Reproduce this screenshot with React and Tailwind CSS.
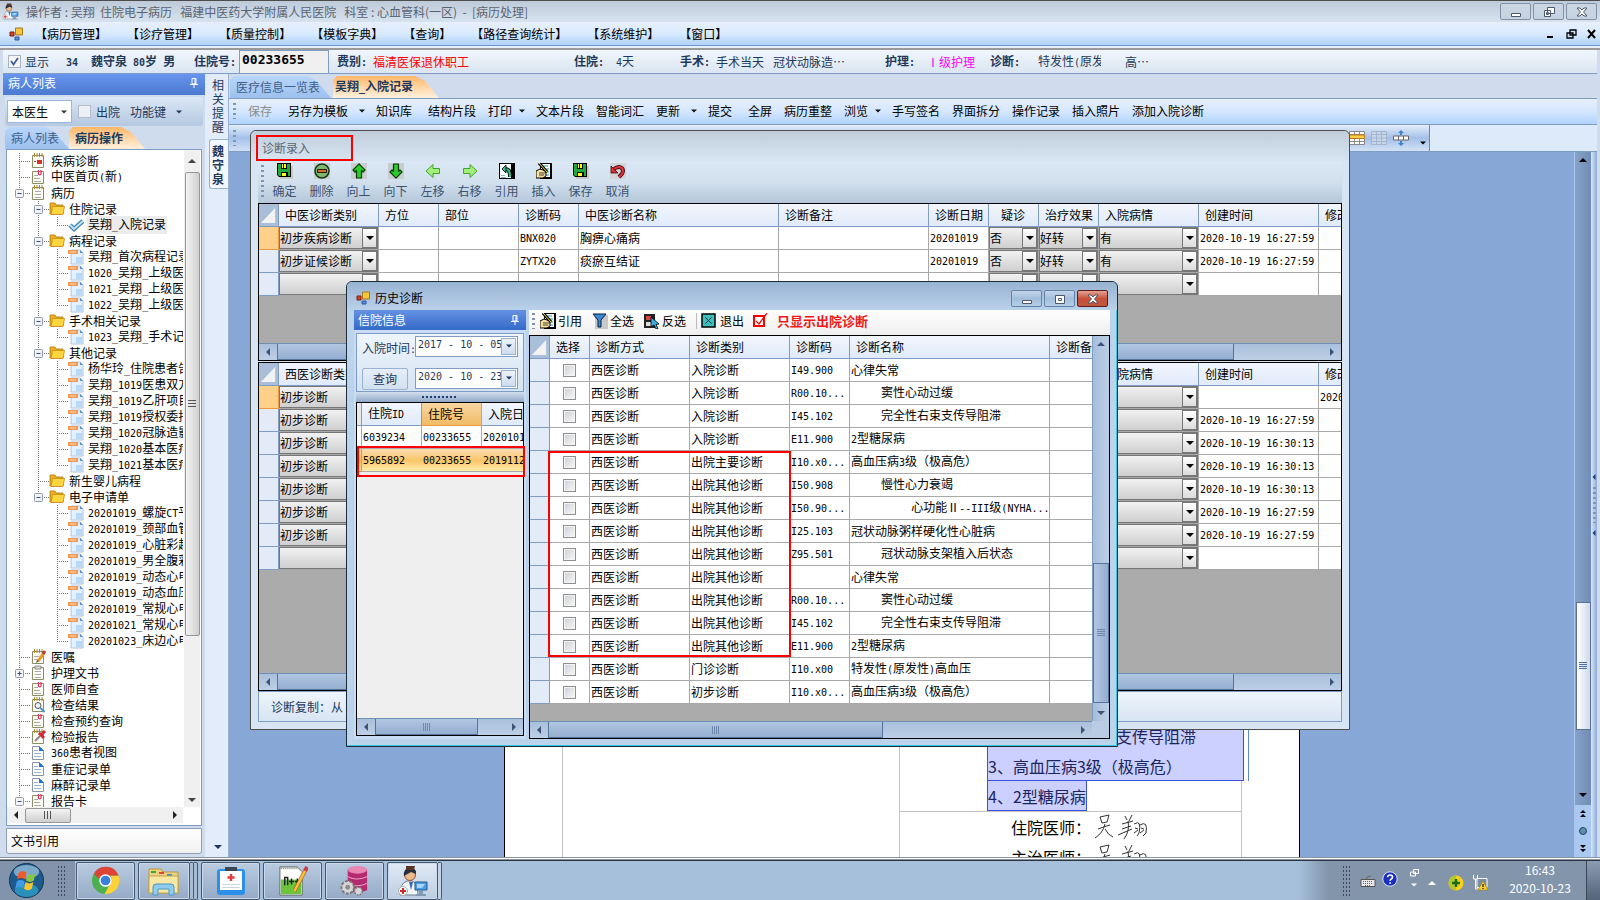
import React from 'react';

const menus = ['病历管理', '诊疗管理', '质量控制', '模板字典', '查询', '路径查询统计', '系统维护', '窗口'];

const toolItems = [
    { text: '保存', cls: 'w-10 text-[#8d8d8d]' },
    { text: '另存为模板', cls: 'w-[88px]', arrow: true },
    { text: '知识库', cls: 'w-[52px]' },
    { text: '结构片段', cls: 'w-[60px]' },
    { text: '打印', cls: 'w-12', arrow: true },
    { text: '文本片段', cls: 'w-[60px]' },
    { text: '智能词汇', cls: 'w-[60px]' },
    { text: '更新', cls: 'w-[52px]', arrow: true },
    { text: '提交', cls: 'w-10' },
    { text: '全屏', cls: 'w-9' },
    { text: '病历重整', cls: 'w-[60px]' },
    { text: '浏览', cls: 'w-12', arrow: true },
    { text: '手写签名', cls: 'w-[60px]' },
    { text: '界面拆分', cls: 'w-[60px]' },
    { text: '操作记录', cls: 'w-[60px]' },
    { text: '插入照片', cls: 'w-[60px]' },
    { text: '添加入院诊断', cls: 'w-[84px]' },
];

// level, icon, text, open ('-', '+' or nothing), last child of its group
const tree = [
    { level: 0, icon: 'noteRed', text: '疾病诊断' },
    { level: 0, icon: 'clip', text: '中医首页(新)' },
    { level: 0, icon: 'note', text: '病历', open: '-' },
    { level: 1, icon: 'folder', text: '住院记录', open: '-' },
    { level: 2, icon: 'check', text: '吴翔_入院记录', last: true, active: true },
    { level: 1, icon: 'folder', text: '病程记录', open: '-' },
    { level: 2, icon: 'doc', text: '吴翔_首次病程记录' },
    { level: 2, icon: 'doc', text: '1020_吴翔_上级医师' },
    { level: 2, icon: 'doc', text: '1021_吴翔_上级医师' },
    { level: 2, icon: 'doc', text: '1022_吴翔_上级医师', last: true },
    { level: 1, icon: 'folder', text: '手术相关记录', open: '-' },
    { level: 2, icon: 'doc', text: '1023_吴翔_手术记录', last: true },
    { level: 1, icon: 'folder', text: '其他记录', open: '-' },
    { level: 2, icon: 'doc', text: '杨华玲_住院患者告知' },
    { level: 2, icon: 'doc', text: '吴翔_1019医患双方' },
    { level: 2, icon: 'doc', text: '吴翔_1019乙肝项目' },
    { level: 2, icon: 'doc', text: '吴翔_1019授权委托' },
    { level: 2, icon: 'doc', text: '吴翔_1020冠脉造影' },
    { level: 2, icon: 'doc', text: '吴翔_1020基本医疗' },
    { level: 2, icon: 'doc', text: '吴翔_1021基本医疗', last: true },
    { level: 1, icon: 'folder', text: '新生婴儿病程' },
    { level: 1, icon: 'folder', text: '电子申请单', open: '-', last: true },
    { level: 2, icon: 'doc', text: '20201019_螺旋CT平扫', end: true },
    { level: 2, icon: 'doc', text: '20201019_颈部血管', end: true },
    { level: 2, icon: 'doc', text: '20201019_心脏彩超', end: true },
    { level: 2, icon: 'doc', text: '20201019_男全腹彩', end: true },
    { level: 2, icon: 'doc', text: '20201019_动态心电', end: true },
    { level: 2, icon: 'doc', text: '20201019_动态血压', end: true },
    { level: 2, icon: 'doc', text: '20201019_常规心电', end: true },
    { level: 2, icon: 'doc', text: '20201021_常规心电', end: true },
    { level: 2, icon: 'doc', text: '20201023_床边心电', end: true, last: true },
    { level: 0, icon: 'pencil', text: '医嘱' },
    { level: 0, icon: 'board', text: '护理文书', open: '+' },
    { level: 0, icon: 'clip', text: '医师自查' },
    { level: 0, icon: 'search', text: '检查结果' },
    { level: 0, icon: 'clip', text: '检查预约查询' },
    { level: 0, icon: 'pin', text: '检验报告' },
    { level: 0, icon: 'page', text: '360患者视图' },
    { level: 0, icon: 'page', text: '重症记录单' },
    { level: 0, icon: 'page', text: '麻醉记录单' },
    { level: 0, icon: 'clip', text: '报告卡', open: '-' },
];

const historyRows = [
    ['入院诊断', 'I49.900', '心律失常'],
    ['入院诊断', 'R00.10...', '     窦性心动过缓'],
    ['入院诊断', 'I45.102', '     完全性右束支传导阻滞'],
    ['入院诊断', 'E11.900', '2型糖尿病'],
    ['出院主要诊断', 'I10.x0...', '高血压病3级（极高危）'],
    ['出院其他诊断', 'I50.908', '     慢性心力衰竭'],
    ['出院其他诊断', 'I50.90...', '          心功能Ⅱ--III级(NYHA...'],
    ['出院其他诊断', 'I25.103', '冠状动脉粥样硬化性心脏病'],
    ['出院其他诊断', 'Z95.501', '     冠状动脉支架植入后状态'],
    ['出院其他诊断', '', '心律失常'],
    ['出院其他诊断', 'R00.10...', '     窦性心动过缓'],
    ['出院其他诊断', 'I45.102', '     完全性右束支传导阻滞'],
    ['出院其他诊断', 'E11.900', '2型糖尿病'],
    ['门诊诊断', 'I10.x00', '特发性(原发性)高血压'],
    ['初步诊断', 'I10.x0...', '高血压病3级（极高危）'],
];

const tcmRows = [
    { type: '初步疾病诊断', code: 'BNX020', name: '胸痹心痛病', date: '20201019', doubt: '否', effect: '好转', state: '有', time: '2020-10-19 16:27:59' },
    { type: '初步证候诊断', code: 'ZYTX20', name: '痰瘀互结证', date: '20201019', doubt: '否', effect: '好转', state: '有', time: '2020-10-19 16:27:59' },
    { type: '' },
];

const westRows = [
    { type: '初步诊断', changed: '20201019' },
    { type: '初步诊断', time: '2020-10-19 16:27:59' },
    { type: '初步诊断', time: '2020-10-19 16:30:13' },
    { type: '初步诊断', time: '2020-10-19 16:30:13' },
    { type: '初步诊断', time: '2020-10-19 16:30:13' },
    { type: '初步诊断', time: '2020-10-19 16:27:59' },
    { type: '初步诊断', time: '2020-10-19 16:27:59' },
    { type: '' },
];

// latin runs are set in a half-width mono face next to the full-width characters
const T = ({ children }) => (
    <>
        {children.split(/([\x20-\x7e]+)/).filter(Boolean).map((part, i) =>
            /^[\x20-\x7e]/.test(part) ? (
                <span key={i} className="whitespace-pre font-['DejaVu_Sans_Mono',monospace] text-[10px]">{part}</span>
            ) : (
                <span key={i}>{part}</span>
            )
        )}
    </>
);

const Triangle = ({ dir = 'down', color = '#111', className = '' }) => {
    const d = {
        down: 'M0 2h8L4 6z',
        up: 'M0 6h8L4 2z',
        left: 'M6 0v8L2 4z',
        right: 'M2 0v8l4-4z',
    }[dir];
    return (
        <svg viewBox="0 0 8 8" className={`h-2 w-2 shrink-0 ${className}`}>
            <path d={d} fill={color} />
        </svg>
    );
};

const Floppy = () => (
    <svg viewBox="0 0 16 16" className="h-4 w-4">
        <path d="M3 3h13v13H3z" fill="#c8c8c8" />
        <path d="M0 0h14v14H2l-2-2z" fill="#000" />
        <path d="M1 1h3v5h6V1h3v12h-2V9H4v4H2l-1-1z" fill="#1fa83c" />
        <path d="M5 1h4v4H5zM5 10h4v3H5z" fill="#ffff20" />
        <path d="M6 1h1v4H6z" fill="#000" />
    </svg>
);

// bold arrow of the up / down tools
const Arrow = ({ down }) => (
    <svg viewBox="0 0 16 16" className="h-4 w-4">
        <path d="M0 0h16v16H0z" fill="#c9ccd0" />
        <path
            d="M8 .8L14 7 12 9 10.500 7.500V15H5.500V7.500L4 9 2 7z"
            transform={down ? 'rotate(180 8 8)' : undefined}
            fill="#2bcb2b"
            stroke="#063d06"
            strokeWidth="1.200"
            strokeLinejoin="round"
        />
    </svg>
);

// light arrow of the left / right tools
const SoftArrow = ({ right }) => (
    <svg viewBox="0 0 16 16" className="h-4 w-4">
        <path
            d="M1 8L8 1.500V5.500H14.500V10.500H8V14.500z"
            transform={right ? 'rotate(180 8 8)' : undefined}
            fill="#a4ee7c"
            stroke="#3fa52c"
            strokeLinejoin="round"
        />
    </svg>
);

const Insert = () => (
    <svg viewBox="0 0 16 16" className="h-4 w-4">
        <path d="M4 0h12v16H4z" fill="#000" />
        <path d="M5 1h9v13H5z" fill="#fff" />
        <path d="M7 3h5M9 6h4M10 9h3M9 12h4" stroke="#269b9b" />
        <path d="M0 8l4-2 6 2v5l-3 2H0z" fill="#f5dfa0" stroke="#000" />
        <path d="M3 0l8 9" stroke="#000" strokeWidth="3" />
        <path d="M3 0l8 9" stroke="#f8e23c" />
        <path d="M3 10h6M3 12h5" stroke="#000" strokeWidth=".7" />
    </svg>
);

const entryTools = [
    { text: '确定', icon: <Floppy /> },
    {
        text: '删除',
        icon: (
            <svg viewBox="0 0 16 16" className="h-4 w-4">
                <path d="M0 0h16v16H0z" fill="#c9ccd0" />
                <circle cx="8" cy="8" r="7" fill="#7cb870" stroke="#173817" strokeWidth="1.600" />
                <path d="M3.500 6.500h9v3h-9z" fill="#d3701c" stroke="#2a1a08" />
            </svg>
        ),
    },
    { text: '向上', icon: <Arrow /> },
    { text: '向下', icon: <Arrow down /> },
    { text: '左移', icon: <SoftArrow /> },
    { text: '右移', icon: <SoftArrow right /> },
    {
        text: '引用',
        icon: (
            <svg viewBox="0 0 16 16" className="h-4 w-4">
                <path d="M0 0h16v16H0z" fill="#000" />
                <path d="M1 1h11v14H1z" fill="#fff" />
                <path d="M11 14C11 8 10 6 6 6" stroke="#000" strokeWidth="4" fill="none" />
                <path d="M11 14C11 8 10 6 6 6" stroke="#37b98c" strokeWidth="2.200" fill="none" />
                <path d="M3 6l4-4v8z" fill="#37b98c" stroke="#000" strokeWidth=".8" />
                <path d="M2 12.500h4M2 14.500h5" stroke="#6aa" strokeWidth=".8" />
            </svg>
        ),
    },
    { text: '插入', icon: <Insert /> },
    { text: '保存', icon: <Floppy /> },
    {
        text: '取消',
        icon: (
            <svg viewBox="0 0 16 16" className="h-4 w-4">
                <path d="M0 0h16v16H0z" fill="#d2d4d8" />
                <path d="M3 7c5-5 10-3 10 1 0 3-2 4-4 6" stroke="#3c0a0a" strokeWidth="4" fill="none" />
                <path d="M3 7c5-5 10-3 10 1 0 3-2 4-4 6" stroke="#e0313c" strokeWidth="2.200" fill="none" />
                <path d="M1 3v7h7z" fill="#e0313c" stroke="#3c0a0a" strokeWidth=".8" />
            </svg>
        ),
    },
];

const NoteBase = ({ children }) => (
    <svg viewBox="0 0 16 16" className="h-4 w-4 shrink-0">
        <path d="M1.500 2.500h11v12h-11z" fill="#fdfdf6" stroke="#8c8c64" />
        {children}
    </svg>
);

const Rings = () => <path d="M3.500 0v4M6 0v4M8.500 0v4M11 0v4" stroke="#a8842c" />;

const TreeIcon = ({ name }) => {
    switch (name) {
        case 'noteRed':
            return <NoteBase><Rings /><path d="M6 7h5v4H6zM3 8h2v1H3z" fill="#d2342c" /></NoteBase>;
        case 'note':
            return <NoteBase><Rings /><path d="M4 6.500h6M4 9.500h6M4 12.500h6" stroke="#aaa" /></NoteBase>;
        case 'clip':
            return (
                <NoteBase>
                    <path d="M3 6.500h4M3 9.500h6M3 12.500h7" stroke="#aaa" />
                    <path d="M7.500 1v4q1 2 2.500 0V1" stroke="#d9305c" fill="none" strokeWidth="1.200" />
                </NoteBase>
            );
        case 'pencil':
            return (
                <NoteBase>
                    <Rings />
                    <path d="M3 7.500h5M3 10.500h3" stroke="#aaa" />
                    <path d="M7 12l6-8" stroke="#e89a28" strokeWidth="3" />
                    <path d="M12 5l2-3" stroke="#b8383c" strokeWidth="3" />
                    <path d="M5 14l1-3 2 1z" fill="#444" />
                </NoteBase>
            );
        case 'board':
            return (
                <NoteBase>
                    <path d="M4 1h6v3H4z" fill="#ddd" stroke="#777" strokeWidth=".8" />
                    <path d="M4 6.500h6M4 9.500h6M4 12.500h6" stroke="#aaa" />
                </NoteBase>
            );
        case 'search':
            return (
                <NoteBase>
                    <Rings />
                    <circle cx="7" cy="8.500" r="3" fill="#e8f2fb" stroke="#555" />
                    <path d="M9.500 11l4 4" stroke="#3f96dc" strokeWidth="2" />
                </NoteBase>
            );
        case 'pin':
            return (
                <NoteBase>
                    <Rings />
                    <path d="M4 12l5-5" stroke="#888" strokeWidth="2" />
                    <path d="M8 4l5 5M9 7l5-5" stroke="#d32a30" strokeWidth="3" />
                </NoteBase>
            );
        case 'page':
            return (
                <svg viewBox="0 0 16 16" className="h-4 w-4 shrink-0">
                    <path d="M1.500 1.500h7l4 4v9h-11z" fill="#fff" stroke="#8a94a8" />
                    <path d="M8 1l5 5H8z" fill="#1673e8" />
                    <path d="M3 5.500h4M3 8.500h7M3 11.500h7" stroke="#9ab4d4" />
                </svg>
            );
        case 'folder':
            return (
                <svg viewBox="0 0 16 16" className="h-4 w-4 shrink-0">
                    <path d="M1 2h5l1 2h7v9H1z" fill="#f0b21c" stroke="#a87410" strokeWidth=".8" />
                    <path d="M3.500 5.500h12L14 13.500H2z" fill="#ffd540" stroke="#c28c10" strokeWidth=".8" />
                </svg>
            );
        case 'check':
            return (
                <svg viewBox="0 0 16 16" className="h-4 w-4 shrink-0">
                    <path d="M2 8l4 4 9-8" stroke="#3b86b8" strokeWidth="4.500" fill="none" />
                    <path d="M2 8l4 4 9-8" stroke="#c4e4f6" strokeWidth="2" fill="none" />
                </svg>
            );
        default:
            return (
                <svg viewBox="0 0 16 16" className="h-4 w-4 shrink-0">
                    <path d="M3 1h9l3 3v11H3z" fill="#e4f0fd" stroke="#9bb8d8" strokeWidth=".8" />
                    <path d="M8 8h6v6H8z" fill="#b9daf6" />
                    <path d="M12 1v3h3" fill="#5a8cc8" />
                    <path d="M0 1h10v4H0z" fill="#ee9a50" />
                    <path d="M2 3h6" stroke="#fbd6ae" />
                </svg>
            );
    }
};

const branchWidth = ['w-6', 'w-[42px]', 'w-[61px]'];

const Branch = ({ row }) => {
    const width = [24, 42, 61][row.level];
    const x = [12, 31, 50][row.level];
    return (
        <svg viewBox={`0 0 ${width} 16`} className={`h-4 shrink-0 ${branchWidth[row.level]}`}>
            <g stroke="#777" strokeDasharray="1 1" fill="none">
                <path d="M12.500 0v16" />
                {row.level === 1 && <path d={row.last ? 'M31.500 0v8' : 'M31.500 0v16'} />}
                {row.level === 2 && !row.end && <path d="M31.500 0v16" />}
                {row.level === 2 && <path d={row.last ? 'M50.500 0v8' : 'M50.500 0v16'} />}
                <path d={`M${x} 8.500H${width}`} />
            </g>
            {row.open && (
                <g>
                    <rect x={x - 3.5} y="4.500" width="8" height="8" rx="1" fill="#f4f4f4" stroke="#8e9aa8" />
                    <path d={`M${x - 1.5} 8.500h4`} stroke="#2c4c94" />
                    {row.open === '+' && <path d={`M${x + 0.5} 6.500v4`} stroke="#2c4c94" />}
                </g>
            )}
        </svg>
    );
};

const TreeRow = ({ row }) => (
    <li className="flex h-4 items-center">
        <Branch row={row} />
        <TreeIcon name={row.icon} />
        <span className={`ml-[3px] shrink-0 px-px leading-4 ${row.active ? 'bg-[#ececec]' : ''}`}>
            <T>{row.text}</T>
        </span>
    </li>
);

const Pin = () => (
    <svg viewBox="0 0 10 10" className="h-2.5 w-2.5">
        <path d="M3 .5h4V6H3zM1 6.500h8M5 7v3M6 1v5" stroke="#fff" fill="none" />
    </svg>
);

const FormIcon = () => (
    <svg viewBox="0 0 14 14" className="h-3.5 w-3.5 shrink-0">
        <path d="M6.500 1h7v7h-7z" fill="#f7c53a" stroke="#a8781c" />
        <path d="M1 5h4v4H1z" fill="#d2442c" stroke="#7e1c10" />
        <path d="M6 10h4v3H6z" fill="#5a8edc" stroke="#2c58a0" />
    </svg>
);

const Doctor = ({ className }) => (
    <svg viewBox="0 0 32 32" className={className}>
        <path d="M3 30q0-12 7-14h5q6 2 6 14z" fill="#f2f6fa" stroke="#6c7d92" />
        <circle cx="13" cy="10" r="5.500" fill="#eab98c" stroke="#8a5a38" />
        <path d="M7 11q-1-8 6-8t6 6l-5-2z" fill="#26303c" />
        <path d="M9 1h9l-1 4H9z" fill="#5a3424" />
        <path d="M12 17l2 8 2-8z" fill="#3a6cb0" />
        <path d="M18 17h12v8H18z" fill="#4a9ce4" stroke="#22588f" />
        <path d="M20 19h8l-3 4h-5z" fill="#a8d4f8" />
        <path d="M22 26h4v3h-4zM19 29h10v2H19z" fill="#7f99b4" />
        <circle cx="6" cy="26" r="4.500" fill="#fff" stroke="#aaa" />
        <path d="M6 23v6M3 26h6" stroke="#d12c2c" strokeWidth="2" />
    </svg>
);

const winPaths = {
    min: <path d="M4.500 8.500h9v3h-9z" fill="#fff" stroke="#4c586c" />,
    max: <path d="M4.500 3.500h9v8h-9zM7.500 6.500h3v2h-3z" fill="#fff" stroke="#4c586c" />,
    restore: <path d="M7.500 2.500h7v6h-7zM4.500 5.500h6v6h-6zM6.500 7.500h2v2h-2z" fill="#fff" stroke="#4c586c" />,
    close: <path d="M4 3h3l2 2 2-2h3l-3.500 4L14 11h-3L9 9l-2 2H4l3.500-4z" fill="#fff" stroke="#4c586c" />,
};

const WinButton = ({ kind, label, tone }) => (
    <button
        aria-label={label}
        className={`flex h-[17px] w-[31px] items-center justify-center rounded-[2px] border ${
            tone === 'red'
                ? 'border-[#5c1c1c] bg-linear-to-b from-[#e2a294] via-[#c8513a] to-[#c0573e]'
                : tone === 'blue'
                    ? 'border-[#6682a8] bg-linear-to-b from-[#c3d6ea] via-[#a3bedb] to-[#b4cee8]'
                    : 'border-[#8390a8] bg-linear-to-b from-[#ccd6e2] to-[#c4d2e2]'
        }`}
    >
        <svg viewBox="0 0 18 14" className="h-3.5 w-[18px]">{winPaths[kind]}</svg>
    </button>
);

const HScroll = ({ thumb }) => (
    <div className="flex h-[17px] shrink-0 items-stretch border-t border-[#6d8fb5] bg-linear-to-b from-[#a9c0dc] to-[#bccfe5]">
        <button aria-label="向左滚动" className="flex w-[18px] items-center justify-center">
            <Triangle dir="left" color="#3e5378" />
        </button>
        <div className={`flex items-center justify-center border border-t-0 border-[#54749c] bg-linear-to-b from-[#b2c8e2] to-[#94aed0] ${thumb}`}>
            <svg viewBox="0 0 8 8" className="h-2 w-2"><path d="M.5 0v8M2.500 0v8M4.500 0v8M6.500 0v8" stroke="#7089ae" /></svg>
        </div>
        <button aria-label="向右滚动" className="ml-auto flex w-[18px] items-center justify-center">
            <Triangle dir="right" color="#3e5378" />
        </button>
    </div>
);

const CellSelect = ({ value = '', label }) => (
    <div className="relative h-[22px] border border-[#777] bg-linear-to-b from-[#f2f2f2] via-[#e0e0e0] to-[#cfcfcf]">
        <select aria-label={label} className="h-5 w-full appearance-none leading-5 outline-none" defaultValue={value}>
            <option value={value}>{value}</option>
        </select>
        <span className="pointer-events-none absolute inset-y-0 right-0 flex w-[15px] items-center justify-center border border-[#777] bg-linear-to-b from-white to-[#dcdcdc]">
            <Triangle color="#000" />
        </span>
    </div>
);

const Corner = () => (
    <svg viewBox="0 0 20 22" className="h-[22px] w-full" preserveAspectRatio="none">
        <path d="M0 0h20v22H0z" fill="#a9bed9" />
        <path d="M2 19L17 4v15z" fill="#f2f2f2" />
    </svg>
);

const th = 'h-[23px] overflow-hidden whitespace-nowrap border-b border-r border-[#7f9dc4] bg-linear-to-b from-[#f2f6fd] to-[#e0eafa] p-0 pl-1.5 text-left font-normal';
const td = 'h-[23px] overflow-hidden whitespace-nowrap border-b border-r border-[#a9a9a9] bg-white p-0 pl-px';
const tdSelect = 'h-[23px] border-b border-r border-[#a9a9a9] bg-white p-0';

const DiagnosisTable = ({ kind, rows }) => (
    <div className="min-h-0 flex-1 overflow-hidden bg-[#ababab]">
        <table className="w-[1140px] table-fixed border-separate border-spacing-0 leading-4">
            <colgroup>
                <col className="w-5" />
                <col className="w-[100px]" />
                <col className="w-[60px]" />
                <col className="w-[80px]" />
                <col className="w-[60px]" />
                <col className="w-[200px]" />
                <col className="w-[150px]" />
                <col className="w-[60px]" />
                <col className="w-[50px]" />
                <col className="w-[60px]" />
                <col className="w-[100px]" />
                <col className="w-[120px]" />
                <col className="w-[80px]" />
            </colgroup>
            <thead>
                <tr>
                    <th className="h-[23px] border-b border-r border-[#7f9dc4] p-0"><Corner /></th>
                    {[`${kind}诊断类别`, '方位', '部位', '诊断码', `${kind}诊断名称`, '诊断备注', '诊断日期', '疑诊', '治疗效果', '入院病情', '创建时间', '修改时间'].map((h) => (
                        <th key={h} className={h === '疑诊' ? `${th} pl-3` : th}>{h}</th>
                    ))}
                </tr>
            </thead>
            <tbody>
                {rows.map((r, i) => (
                    <tr key={i}>
                        <td className={`h-[23px] border-b border-r p-0 ${i === 0 ? 'border-[#f0963c] bg-[#ffd08a]' : 'border-[#7f9dc4] bg-[#e3ebf8]'}`} />
                        <td className={tdSelect}><CellSelect value={r.type} label="诊断类别" /></td>
                        <td className={td} />
                        <td className={td} />
                        <td className={td}><T>{r.code || ''}</T></td>
                        <td className={td}>{r.name}</td>
                        <td className={td} />
                        <td className={td}><T>{r.date || ''}</T></td>
                        <td className={tdSelect}><CellSelect value={r.doubt} label="疑诊" /></td>
                        <td className={tdSelect}><CellSelect value={r.effect} label="治疗效果" /></td>
                        <td className={tdSelect}><CellSelect value={r.state} label="入院病情" /></td>
                        <td className={td}><T>{r.time || ''}</T></td>
                        <td className={td}><T>{r.changed || ''}</T></td>
                    </tr>
                ))}
            </tbody>
        </table>
    </div>
);

const Grip = ({ className = '' }) => (
    <span className={`w-[3px] shrink-0 bg-[repeating-linear-gradient(#7f95b3_0_2px,transparent_2px_5px)] ${className}`} />
);

const EntryDialog = () => (
    <section className="absolute left-[250px] top-[130px] flex h-[600px] w-[1100px] flex-col rounded-t-md border border-[#4d4d4d] bg-[#d7e4f1] px-[7px] pb-[7px]">
        <header className="-mx-[7px] flex h-[30px] shrink-0 items-center rounded-t-md bg-linear-to-b from-[#c0cddb] to-[#d7e4f1] pl-[11px] pt-1 text-[#5a6673]">
            诊断录入
        </header>
        <div className="flex h-[42px] shrink-0 items-stretch bg-linear-to-b from-[#dbe7f4] via-[#d2e0ee] to-[#b5c7da]">
            <Grip className="my-1 ml-[3px] mr-0.5" />
            {entryTools.map((t, i) => (
                <button key={i} className="flex w-[37px] flex-col items-center justify-between pb-1 pt-0.5 text-[#3b536f]">
                    {t.icon}
                    <span className="leading-4">{t.text}</span>
                </button>
            ))}
        </div>
        <div className="flex h-[158px] shrink-0 flex-col overflow-hidden border border-black">
            <DiagnosisTable kind="中医" rows={tcmRows} />
            <HScroll thumb="w-[957px]" />
        </div>
        <div className="mt-px flex min-h-0 flex-1 flex-col overflow-hidden border border-black">
            <DiagnosisTable kind="西医" rows={westRows} />
            <HScroll thumb="w-[957px]" />
        </div>
        <footer className="flex h-[31px] shrink-0 items-center border border-[#7f9dc4] bg-linear-to-b from-[#eef5fd] to-[#d8e5f2] pl-3 text-[#1e395b]">
            诊断复制：从
        </footer>
        <span className="pointer-events-none absolute left-[5px] top-1 h-[26px] w-[97px] border-2 border-[#f00]" />
    </section>
);

const DateField = ({ id, value, label }) => (
    <div className="flex h-[21px] w-[103px] items-center border border-[#7f9dc4] bg-white p-px">
        <input
            id={id}
            type="text"
            aria-label={label}
            defaultValue={value}
            className="w-[84px] min-w-0 flex-1 pb-0.5 pl-px font-['DejaVu_Sans_Mono',monospace] text-[10px] outline-none"
        />
        <button aria-label="选择日期" className="flex h-[17px] w-[15px] shrink-0 items-center justify-center border border-[#9ab2d2] bg-linear-to-b from-[#edf4fd] to-[#ccdcf0]">
            <Triangle color="#1e395b" className="scale-75" />
        </button>
    </div>
);

const StayPanel = () => (
    <aside className="flex w-[172px] shrink-0 flex-col bg-[#9cbce8]">
        <div className="flex h-5 shrink-0 items-center justify-between bg-linear-to-b from-[#6591e2] to-[#336ac8] pl-1 pr-1.5 text-white">
            信院信息
            <Pin />
        </div>
        <div className="flex min-h-0 flex-1 flex-col bg-[#c8dcf6] px-0.5 pt-[3px] pb-[3px]">
            <div className="grid h-[59px] shrink-0 grid-cols-[53px_103px] content-center gap-y-1.5 border border-[#7f9dc4] bg-linear-to-b from-[#eef5fc] to-[#d5e3f2] pl-[5px] text-[#1e395b]">
                <label htmlFor="from" className="whitespace-nowrap leading-6"><T>入院时间:</T></label>
                <DateField id="from" value="2017 - 10 - 05" />
                <button className="h-[22px] w-[46px] rounded-[2px] border border-[#9ab2d2] bg-linear-to-b from-[#e6eef8] to-[#d2e0f0] leading-4">查询</button>
                <DateField id="to" label="截止时间" value="2020 - 10 - 23" />
            </div>
            <div className="flex h-2.5 shrink-0 items-center justify-center bg-linear-to-b from-[#d3dfee] to-[#90a8c8]">
                <span className="h-0.5 w-9 bg-[repeating-linear-gradient(90deg,#1e3c78_0_2px,transparent_2px_4px)]" />
            </div>
            <div className="relative flex min-h-0 flex-1 flex-col border border-black bg-[#efefef]">
                <div className="min-h-0 flex-1 overflow-hidden">
                    <table className="w-[205px] table-fixed border-separate border-spacing-0 leading-4">
                        <colgroup>
                            <col className="w-[5px]" />
                            <col className="w-[60px]" />
                            <col className="w-[60px]" />
                            <col className="w-[80px]" />
                        </colgroup>
                        <thead>
                            <tr>
                                <th className="border-b border-r border-[#7f9dc4] bg-[#e8e8e8] p-0" />
                                <th className={th}><T>住院ID</T></th>
                                <th className="h-[23px] border-b border-r border-[#f0963c] bg-linear-to-b from-[#f8d6a2] to-[#f0bc64] p-0 pl-1.5 text-left font-normal">住院号</th>
                                <th className={th}>入院日期</th>
                            </tr>
                        </thead>
                        <tbody>
                            <tr>
                                <td className="border-b border-r border-[#a9a9a9] bg-white p-0" />
                                <td className={td}><T>6039234</T></td>
                                <td className={td}><T>00233655</T></td>
                                <td className={td}><T>20201019</T></td>
                            </tr>
                            <tr className="bg-linear-to-b from-[#f9dcb0] via-[#fcc666] to-[#fff0b0]">
                                <td className="border-b border-r border-[#e0963c] p-0" />
                                <td className="h-[23px] border-b border-[#a9a9a9] p-0 pl-px"><T>5965892</T></td>
                                <td className="h-[23px] border-b border-[#a9a9a9] p-0 pl-px"><T>00233655</T></td>
                                <td className="h-[23px] border-b border-[#a9a9a9] p-0 pl-px"><T>20191123</T></td>
                            </tr>
                        </tbody>
                    </table>
                </div>
                <HScroll thumb="w-[103px]" />
                <span className="pointer-events-none absolute -right-0.5 left-0 top-[43px] h-[31px] border-2 border-[#f00]" />
            </div>
        </div>
    </aside>
);

const HistoryDialog = () => (
    <section className="absolute left-[346px] top-[281px] flex h-[466px] w-[772px] flex-col rounded-t-md border border-[#1c2b3a] bg-[#bcd3ec] shadow-[inset_-1px_-1px_0_#35c8e0]">
        <header className="flex h-7 shrink-0 items-start rounded-t-md bg-linear-to-b from-[#98b3d2] to-[#bad1ea] pl-[9px] pr-[9px] pt-2">
            <span className="flex items-center gap-[5px] leading-4">
                <FormIcon />
                历史诊断
            </span>
            <span className="ml-auto flex gap-0.5">
                <WinButton kind="min" label="最小化" tone="blue" />
                <WinButton kind="max" label="最大化" tone="blue" />
                <WinButton kind="close" label="关闭" tone="red" />
            </span>
        </header>
        <div className="flex min-h-0 flex-1 gap-[3px] px-[7px] pb-[7px]">
            <StayPanel />
            <div className="flex min-w-0 flex-1 flex-col">
                <div className="flex h-[25px] shrink-0 items-center bg-linear-to-b from-white to-[#eee] pb-[3px] leading-4">
                    <Grip className="ml-[3px] mr-[5px] h-4" />
                    <button className="flex w-[52px] items-center gap-0.5"><Insert />引用</button>
                    <button className="flex w-[52px] items-center gap-0.5">
                        <svg viewBox="0 0 16 16" className="h-4 w-4">
                            <path d="M3 2h13v14H3z" fill="#c8c8c8" />
                            <path d="M1 1h13L9 7v7H6V7z" fill="#3a8ad8" stroke="#0b1c34" />
                        </svg>
                        全选
                    </button>
                    <button className="flex w-[52px] items-center gap-0.5">
                        <svg viewBox="0 0 16 16" className="h-4 w-4">
                            <path d="M0 1h11v14H0z" fill="#222" />
                            <path d="M2 3h5v4H2z" fill="#d24848" />
                            <path d="M2 9h5v4H2z" fill="#ddd" />
                            <path d="M7 4l8 7-3 .5 2 4-2 .5-2-4-3 2z" fill="#3eaadc" stroke="#000" strokeWidth=".8" />
                        </svg>
                        反选
                    </button>
                    <span className="h-4 w-[5px] border-l border-[#bbb]" />
                    <button className="flex w-[52px] items-center gap-[3px]">
                        <svg viewBox="0 0 16 16" className="h-4 w-4">
                            <path d="M1 1h13v13H1z" fill="#3dc0b8" stroke="#000" strokeWidth="1.500" />
                            <path d="M4.500 4.500l6 6M10.500 4.500l-6 6" stroke="#0b2c50" />
                        </svg>
                        退出
                    </button>
                    <label className="flex items-center gap-2 font-bold text-[#f01818]">
                        <span className="relative flex h-4 w-4 items-center">
                            <input type="checkbox" defaultChecked className="h-3 w-3 appearance-none border-2 border-[#f00] bg-white" />
                            <svg viewBox="0 0 16 16" className="pointer-events-none absolute inset-0 h-4 w-4">
                                <path d="M3 8l3 3 8-11" stroke="#e01010" strokeWidth="1.300" fill="none" />
                            </svg>
                        </span>
                        <span className="text-[13px]">只显示出院诊断</span>
                    </label>
                </div>
                <div className="relative flex min-h-0 flex-1 flex-col border border-black bg-[#b9cce3]">
                    <div className="flex min-h-0 flex-1">
                        <div className="min-w-0 flex-1 overflow-hidden bg-[#ababab]">
                            <table className="w-[580px] table-fixed border-separate border-spacing-0 leading-4">
                                <colgroup>
                                    <col className="w-5" />
                                    <col className="w-10" />
                                    <col className="w-[100px]" />
                                    <col className="w-[100px]" />
                                    <col className="w-[60px]" />
                                    <col className="w-[200px]" />
                                    <col className="w-[60px]" />
                                </colgroup>
                                <thead>
                                    <tr>
                                        <th className="h-[23px] border-b border-r border-[#7f9dc4] p-0"><Corner /></th>
                                        {['选择', '诊断方式', '诊断类别', '诊断码', '诊断名称', '诊断备注'].map((h) => (
                                            <th key={h} className={th}>{h}</th>
                                        ))}
                                    </tr>
                                </thead>
                                <tbody>
                                    {historyRows.map(([type, code, name], i) => (
                                        <tr key={i}>
                                            <td className="h-[23px] border-b border-r border-[#7f9dc4] bg-[#e3ebf8] p-0" />
                                            <td className="h-[23px] border-b border-r border-[#a9a9a9] bg-white p-0">
                                                <input
                                                    type="checkbox"
                                                    aria-label={`选择 ${name.trim()}`}
                                                    className="mx-auto block h-[13px] w-[13px] appearance-none border border-[#8e8f8f] bg-linear-to-br from-[#ccd0d5] to-[#f8f8f8] shadow-[inset_0_0_0_1px_#f4f4f4]"
                                                />
                                            </td>
                                            <td className={td}>西医诊断</td>
                                            <td className={td}>{type}</td>
                                            <td className={td}><T>{code}</T></td>
                                            <td className={td}><T>{name}</T></td>
                                            <td className={td} />
                                        </tr>
                                    ))}
                                </tbody>
                            </table>
                        </div>
                        <div className="flex w-[17px] shrink-0 flex-col items-center border-l border-[#7f9dc4] bg-linear-to-r from-[#a6bddb] to-[#bccfe5]">
                            <Triangle dir="up" color="#3e5378" className="my-1" />
                            <div className="mt-[211px] flex h-[140px] w-full items-center justify-center border border-[#54749c] bg-linear-to-r from-[#b2c8e2] to-[#94aed0]">
                                <svg viewBox="0 0 8 8" className="h-2 w-2"><path d="M0 .5h8M0 2.500h8M0 4.500h8M0 6.500h8" stroke="#7089ae" /></svg>
                            </div>
                            <Triangle color="#3e5378" className="mt-1.5" />
                        </div>
                    </div>
                    <div className="pr-[17px]"><HScroll thumb="w-[335px]" /></div>
                    <span className="pointer-events-none absolute left-[18px] top-[115px] h-[206px] w-[243px] border-2 border-[#f00]" />
                </div>
            </div>
        </div>
    </section>
);

const Signature = () => (
    <svg viewBox="0 0 54 28" className="h-7 w-[54px]" fill="none" stroke="#333" strokeWidth="1">
        <path d="M6 4l2 6M6 4l9-2-2 7-5 1M4 16q8-3 12-4M11 11Q9 20 1 25M11 16q3 6 8 8" />
        <path d="M31 3l2 4M38 2l-3 6M28 11l11-3M28 16l9-3M24 22l14-6M34 8q2 10-4 18M40 11q8-5 5 9l-2 3M41 15l3 1M40 20l4-3M46 12q8-5 6 8l-3 3M47 15l3 1M46 20l4-3" />
    </svg>
);

const Editor = () => (
    <div className="flex min-h-0 flex-1 bg-[#87a8d6]">
        <div className="flex min-w-0 flex-1 overflow-hidden pl-[275px]">
            <div className="flex w-[796px] shrink-0 border-x border-black bg-white">
                <div className="w-[58px] shrink-0 border-r border-[#c4c4c4]" />
                <div className="w-[337px] shrink-0 border-r border-[#c4c4c4]" />
                <div className="-mb-[15px] flex w-[342px] shrink-0 flex-col justify-end border-r border-[#c4c4c4] text-[16px] leading-[30px]">
                    <div className="border-b border-[#c4c4c4] pl-[87px] text-[#1b2560]">
                        <div className="-mr-2 border-r border-[#5b8ad8] pr-1">
                            <p className="h-[30px] whitespace-nowrap border-x border-[#3a50e0] bg-[#cbd0ff] pl-12">完全性右束支传导阻滞</p>
                            <p className="h-[30px] whitespace-nowrap border-x border-b border-[#3a50e0] bg-[#cbd0ff]">3、高血压病3级（极高危）</p>
                        </div>
                        <p className="inline-block h-[30px] whitespace-nowrap border-x border-b border-[#3a50e0] bg-[#cbd0ff] align-top">4、2型糖尿病</p>
                    </div>
                    <p className="flex h-[30px] items-center gap-[3px] pl-[111px]">住院医师：<Signature /></p>
                    <p className="flex h-[30px] items-center gap-[3px] pl-[111px]">主治医师：<Signature /></p>
                </div>
            </div>
        </div>
        <div className="flex w-[17px] shrink-0 flex-col items-center border-l border-[#a9c4ea] bg-linear-to-r from-[#88a2c8] to-[#6f8db8]">
            <Triangle dir="up" color="#000" className="mt-1" />
            <div className="mt-auto flex h-[128px] w-[15px] items-center justify-center border border-[#5d7196] bg-linear-to-r from-white to-[#cfdaec]">
                <svg viewBox="0 0 8 8" className="h-2 w-2"><path d="M0 .5h8M0 2.500h8M0 4.500h8M0 6.500h8" stroke="#4d6ea4" /></svg>
            </div>
            <Triangle color="#000" className="mb-1.5 mt-[61px]" />
            <div className="flex h-[52px] w-full flex-col items-center justify-between bg-[#a9c8f2] py-1">
                <svg viewBox="0 0 8 9" className="h-[9px] w-2"><path d="M1 4h6L4 1zM1 8h6L4 5z" /></svg>
                <span className="h-2 w-2 rounded-full border border-[#20486c] bg-[#5d8fa8]" />
                <svg viewBox="0 0 8 9" className="h-[9px] w-2"><path d="M1 1h6L4 4zM1 5h6L4 8z" /></svg>
            </div>
        </div>
        <div className="flex w-1.5 shrink-0 flex-col items-center justify-center gap-1.5 bg-linear-to-r from-[#dbe8fa] to-[#8cabd8]">
            <Triangle dir="left" color="#1e3c78" className="scale-75" />
            <Grip className="h-9" />
            <Triangle dir="left" color="#1e3c78" className="scale-75" />
        </div>
    </div>
);

const SlantTab = ({ active, children, className = '' }) => (
    <button
        className={`pl-1.5 text-left leading-5 text-[#1e395b] [clip-path:polygon(0_4px,4px_0,calc(100%_-_24px)_0,calc(100%_-_14px)_5px,100%_100%,0_100%)] ${
            active ? 'bg-linear-to-b from-[#ffb765] to-[#fff1dd] font-bold' : 'bg-linear-to-b from-[#b9d6fb] to-[#9cc0ee] text-[#3e5f88]'
        } ${className}`}
    >
        {children}
    </button>
);

const PatientPanel = () => (
    <aside className="flex w-[202px] shrink-0 flex-col bg-[#a7c6f0]">
        <div className="flex h-[21px] shrink-0 items-center justify-between bg-linear-to-b from-[#6794ee] to-[#4b7ad0] pb-1 pl-[5px] pr-1.5 text-white">
            病人列表
            <Pin />
        </div>
        <div className="flex min-h-0 flex-1 flex-col bg-[#cfdcee] pt-0.5">
            <div className="mx-0.5 flex h-[29px] shrink-0 items-center rounded-[3px] bg-linear-to-b from-[#dce8f6] to-[#b4c8e0] pl-0.5 text-[#1e395b]">
                <div className="relative h-[23px] w-[65px]">
                    <select aria-label="医生" className="h-full w-full appearance-none border border-[#9ab8de] bg-white pl-1 text-black">
                        <option>本医生</option>
                    </select>
                    <Triangle color="#333" className="pointer-events-none absolute right-1 top-2 scale-75" />
                </div>
                <label className="ml-1.5 flex items-center gap-[5px]">
                    <input type="checkbox" className="h-[13px] w-[13px] appearance-none border border-[#b4bccb] bg-[#eceff3]" />
                    出院
                </label>
                <button className="ml-2.5 flex items-center gap-[9px]">
                    功能键
                    <Triangle color="#1e395b" className="scale-75" />
                </button>
            </div>
            <div className="flex h-[23px] shrink-0 items-end pl-0.5 pt-px">
                <SlantTab className="h-[22px] w-[64px]">病人列表</SlantTab>
                <SlantTab active className="h-[22px] w-[76px]">病历操作</SlantTab>
            </div>
            <div className="mx-[3px] flex min-h-0 flex-1 flex-col border border-[#7f9dc4] bg-white">
                <div className="flex min-h-0 flex-1">
                    <ul className="min-w-0 flex-1 overflow-hidden pt-[3px]">
                        {tree.map((row, i) => <TreeRow key={i} row={row} />)}
                    </ul>
                    <div className="ml-px mr-px flex w-4 shrink-0 flex-col items-center bg-[#f0f0f0]">
                        <Triangle dir="up" color="#444" className="my-[7px]" />
                        <div className="flex min-h-0 w-[15px] flex-[463] items-center justify-center rounded-[2px] border border-[#979797] bg-linear-to-r from-[#f4f4f4] to-[#cfcfcf]">
                            <svg viewBox="0 0 8 8" className="h-2 w-2"><path d="M0 .5h8M0 3.500h8M0 6.500h8" stroke="#555" /></svg>
                        </div>
                        <div className="flex-[158]" />
                        <Triangle color="#444" className="my-[3px]" />
                    </div>
                </div>
                <div className="mb-0.5 mr-[18px] flex h-4 shrink-0 items-center bg-[#f0f0f0]">
                    <Triangle dir="left" color="#222" className="mx-[5px]" />
                    <div className="flex h-[15px] w-[46px] items-center justify-center rounded-[2px] border border-[#979797] bg-linear-to-b from-[#f4f4f4] to-[#cfcfcf]">
                        <svg viewBox="0 0 8 8" className="h-2 w-2"><path d="M.5 0v8M3.500 0v8M6.500 0v8" stroke="#555" /></svg>
                    </div>
                    <Triangle dir="right" color="#222" className="ml-auto mr-1" />
                </div>
            </div>
            <button className="mx-[3px] mb-[3px] mt-0.5 h-[26px] shrink-0 rounded-b-[3px] border border-[#8f9fb8] bg-linear-to-b from-white to-[#f0f0f0] pl-1 text-left">
                文书引用
            </button>
        </div>
    </aside>
);

const PatientBar = () => (
    <div className="mx-[3px] flex h-6 shrink-0 items-center whitespace-nowrap border-b border-[#7f9dc4] bg-linear-to-b from-[#f0f6fc] to-[#dbe6f2] text-[#1e395b]">
        <label className="ml-[5px] flex w-[58px] items-center gap-1">
            <span className="relative h-[13px] w-[13px]">
                <input type="checkbox" defaultChecked className="block h-[13px] w-[13px] appearance-none border border-[#a8b2c0] bg-[#f4f4f4]" />
                <svg viewBox="0 0 13 13" className="pointer-events-none absolute inset-0"><path d="M3 6l2.500 3.500L10 3" stroke="#3c5a94" strokeWidth="1.800" fill="none" /></svg>
            </span>
            显示
        </label>
        <b className="w-[25px]"><T>34</T></b>
        <b className="w-[103px]"><T>魏守泉 80岁 男</T></b>
        <label htmlFor="no" className="w-[45px] font-bold"><T>住院号:</T></label>
        <input
            id="no"
            type="text"
            defaultValue="00233655"
            className="h-6 w-[90px] border border-[#7f9dc4] bg-[#f0f0f0] px-0.5 pb-1 font-['DejaVu_Sans_Mono',monospace] text-[13px] font-bold leading-4 text-black outline-none"
        />
        <b className="ml-2 w-9"><T>费别:</T></b>
        <span className="w-[201px] text-[#f00]">福清医保退休职工</span>
        <b className="w-[42px]"><T>住院:</T></b>
        <span className="w-16"><T>4天</T></span>
        <b className="w-9"><T>手术:</T></b>
        <span className="w-[57px]">手术当天</span>
        <span className="w-28">冠状动脉造⋯</span>
        <b className="w-[42px]"><T>护理:</T></b>
        <span className="w-[63px] text-[#f0f]">Ⅰ级护理</span>
        <b className="w-12"><T>诊断:</T></b>
        <span className="w-[63px] overflow-hidden"><T>特发性(原发性</T></span>
        <span className="ml-6">高⋯</span>
    </div>
);

const TaskButton = ({ label, active, className = 'w-[59px]', children }) => (
    <button
        aria-label={label}
        className={`flex h-[38px] items-center justify-center rounded-[2px] border border-[#46586f] shadow-[inset_0_0_0_1px_#c9d8ea] ${className} ${
            active ? 'bg-linear-to-b from-[#e0eaf5] to-[#bccde1]' : 'bg-linear-to-b from-[#b9cbe0] to-[#94aac6]'
        }`}
    >
        {children}
    </button>
);

const Taskbar = () => (
    <footer className="flex h-10 shrink-0 items-center border-t border-[#2b3542] bg-[#a6c0dc]">
        <div className="flex h-full w-[75px] shrink-0 items-center bg-[#8194ac] pl-2">
            <button aria-label="开始">
                <svg viewBox="0 0 38 38" className="h-[37px] w-[37px]">
                    <circle cx="19" cy="19" r="17.500" fill="#1f5a8c" stroke="#153450" />
                    <ellipse cx="19" cy="29" rx="12" ry="7" fill="#36b4dc" opacity=".6" />
                    <ellipse cx="19" cy="10" rx="13" ry="7" fill="#a4cbe4" opacity=".7" />
                    <path d="M11 11q4-3 8 0l-1.500 7q-4-3-8 0z" fill="#ee5a2a" />
                    <path d="M20 12q4 3 8 0l-1.500 7q-4 3-8 0z" fill="#8cc63e" />
                    <path d="M9 20q4-3 8 0l-1.500 7q-4-3-8 0z" fill="#3f9ce8" />
                    <path d="M18 20.500q4 3 8 0l-1.500 7q-4 3-8 0z" fill="#fbc62c" />
                </svg>
            </button>
            <span className="ml-3 h-[31px] w-2 bg-[radial-gradient(#3c4858_1px,transparent_1px)] bg-[size:3px_4px]" />
        </div>
        <div className="flex gap-[3px] pl-px">
            <TaskButton label="Chrome">
                <svg viewBox="0 0 30 30" className="h-[29px] w-[29px]">
                    <circle cx="15" cy="15" r="14" fill="#4caf50" />
                    <path d="M3 8A14 14 0 0 1 28.500 10H15a6 6 0 0 0-6 4z" fill="#dd4337" />
                    <path d="M28.500 10A14 14 0 0 1 14 29l6-11a6 6 0 0 0 0-8z" fill="#fdd13a" />
                    <circle cx="15" cy="15" r="6.500" fill="#fff" />
                    <circle cx="15" cy="15" r="5" fill="#3b7fdd" />
                </svg>
            </TaskButton>
            <div className="flex">
                <TaskButton label="资源管理器" className="w-[52px]">
                    <svg viewBox="0 0 34 30" className="h-[30px] w-[34px]">
                        <path d="M2 3h12l2 3h15v21H2z" fill="#ecd27c" stroke="#b8973c" />
                        <path d="M4 5h5v2H4z" fill="#3da63c" />
                        <path d="M12 6h5v2h-5z" fill="#d6443c" />
                        <path d="M20 8h5v2h-5z" fill="#3c8ad0" />
                        <path d="M2 10h29v17H2z" fill="#f8e8a4" stroke="#c4a650" />
                        <path d="M6 29v-8q0-3 3-3h15q3 0 3 3v8h-5v-6H11v6z" fill="#8fcdf0" stroke="#4c94c4" />
                    </svg>
                </TaskButton>
                {/* edges of the windows stacked behind the explorer button */}
                <span className="h-[38px] w-1 rounded-r-[2px] border-y border-r border-[#46586f] bg-[#a8bcd4]" />
                <span className="h-[38px] w-1 rounded-r-[2px] border-y border-r border-[#46586f] bg-[#a8bcd4]" />
            </div>
            <TaskButton label="电子病历">
                <svg viewBox="0 0 30 30" className="h-[30px] w-[30px]">
                    <rect x="1" y="3" width="28" height="26" rx="3" fill="#2b90e8" />
                    <path d="M4 5h22v19H4z" fill="#fff" />
                    <path d="M9 1h12v4H9z" fill="#3a4654" />
                    <path d="M15 8v7M11.500 11.500h7" stroke="#e23c3c" strokeWidth="2.500" />
                    <path d="M6 18.500h18M6 21.500h18" stroke="#ccd6e0" />
                </svg>
            </TaskButton>
            <TaskButton label="Notepad++">
                <svg viewBox="0 0 32 32" className="h-[31px] w-[31px]">
                    <path d="M3 2h18l5 5v24H3z" fill="#fff" stroke="#5c6c5c" />
                    <path d="M4 15h21v15H4z" fill="#6cc43c" />
                    <path d="M4 3.500h18" stroke="#888" strokeDasharray="1 1" strokeWidth="2" />
                    <path d="M8 21v-8h3v8M15 14v6M12.500 17h5M21 14v6M18.500 17h5" stroke="#222" strokeWidth="1.500" fill="none" />
                    <path d="M18 27L30 4" stroke="#a86c1c" strokeWidth="4" />
                    <path d="M18 27L30 4" stroke="#f8c040" strokeWidth="2.500" />
                    <path d="M29 6l2-4" stroke="#d2384c" strokeWidth="4" />
                </svg>
            </TaskButton>
            <TaskButton label="PL/SQL">
                <svg viewBox="0 0 32 32" className="h-[31px] w-[31px]">
                    <path d="M9 4v22q9 5 20 0V4z" fill="#b42a6e" />
                    <ellipse cx="19" cy="5" rx="10" ry="4" fill="#ea86b4" />
                    <path d="M9 12q9 5 20 0M9 19q9 5 20 0" stroke="#f0a8c8" fill="none" />
                    <circle cx="9" cy="23" r="6.500" fill="#d6d6d6" stroke="#777" strokeWidth="2" strokeDasharray="3 1.500" />
                    <circle cx="9" cy="23" r="2.500" fill="#8a8a8a" />
                    <circle cx="20" cy="27" r="4" fill="#d6d6d6" stroke="#777" strokeWidth="1.500" strokeDasharray="2 1" />
                </svg>
            </TaskButton>
            <div className="flex">
                <TaskButton label="住院电子病历" active className="w-[51px]">
                    <Doctor className="h-8 w-8" />
                </TaskButton>
                <span className="h-[38px] w-1 rounded-r-[2px] border-y border-r border-[#46586f] bg-[#c4d3e4]" />
            </div>
        </div>
        <div className="ml-auto flex h-full items-center bg-linear-to-r from-[#a6c0dc] to-[#8395ab] to-10% pl-11 text-white">
            <span className="h-[31px] w-2 bg-[radial-gradient(#3c4858_1px,transparent_1px)] bg-[size:3px_4px]" />
            <svg viewBox="0 0 16 14" className="ml-2.5 h-3.5 w-4">
                <path d="M1 5.500h14v7H1z" fill="#e8e8e8" stroke="#555" />
                <path d="M3 7.500h10M3 9.500h10M5 11.500h6" stroke="#666" strokeDasharray="1 1" />
                <path d="M6 5q1-3 5-3" stroke="#666" fill="none" />
            </svg>
            <svg viewBox="0 0 16 16" className="-mt-1 ml-1.5 h-4 w-4">
                <circle cx="8" cy="8" r="7.200" fill="#1a2fc0" stroke="#dfe5f8" />
                <path d="M5.500 6.200q.3-2.200 2.600-2.200t2.400 2q0 1.200-1.200 1.900T8.100 9.800M8.100 11.200v1.600" stroke="#fff" strokeWidth="1.700" fill="none" />
            </svg>
            <span className="mb-1 ml-2.5 flex w-3 flex-col items-center gap-1">
                <svg viewBox="0 0 9 8" className="h-2 w-[9px]"><path d="M3.500.5h5v4h-5zM.5 3h5v4h-5z" fill="#8395ab" stroke="#fff" /></svg>
                <Triangle color="#fff" className="scale-75" />
            </span>
            <Triangle dir="up" color="#fff" className="ml-2 mt-1" />
            <svg viewBox="0 0 16 16" className="ml-3 mt-1 h-4 w-4">
                <circle cx="8" cy="8" r="7.500" fill="#f7d21c" />
                <path d="M8 .5a7.500 7.500 0 0 0 0 15z" fill="#b4c82c" />
                <path d="M8 4v8M4 8h8" stroke="#1c6a1c" strokeWidth="2.500" />
            </svg>
            <svg viewBox="0 0 16 16" className="ml-2 mt-1 h-4 w-4">
                <path d="M5 3.500h10v9H5z" fill="#7c8ca0" stroke="#fff" />
                <path d="M1.500 0v4h4V0M3.500 4v10h5" stroke="#fff" fill="none" />
                <path d="M6 15l5-9 5 9z" fill="#fbd22c" stroke="#9a7a10" strokeWidth=".6" />
                <path d="M11 9v3M11 13v1" stroke="#222" strokeWidth="1.300" />
            </svg>
            <div className="ml-4 w-[72px] pb-1 text-center leading-[18px]">
                16:43<br />2020-10-23
            </div>
            <button aria-label="显示桌面" className="ml-2.5 h-full w-3.5 border-l border-[#3c4858] bg-linear-to-b from-[#8c9cb0] to-[#54647a]" />
        </div>
    </footer>
);

const App = () => (
    <div className="relative flex h-screen flex-col overflow-hidden bg-[#d0dcee] font-['Noto_Sans_CJK_SC',sans-serif] text-[12px] leading-4 text-black">
        <header className="flex h-[22px] shrink-0 items-center border-t border-[#4d4d4d] bg-linear-to-b from-[#bfcad9] to-[#d6e3ef] pl-0.5 pr-[3px] text-[#5a6470]">
            <Doctor className="h-[17px] w-[17px]" />
            <span className="ml-[7px] whitespace-pre">操作者 : 吴翔  住院电子病历   福建中医药大学附属人民医院   科室 : 心血管科(一区)  -  [病历处理]</span>
            <span className="ml-auto flex gap-0.5">
                <WinButton kind="min" label="最小化" />
                <WinButton kind="restore" label="还原" />
                <WinButton kind="close" label="关闭" />
            </span>
        </header>
        <nav className="flex h-6 shrink-0 items-center border-b border-[#6f95c8] bg-linear-to-b from-[#e8effc] via-[#d9eaff] to-[#b0d3fe] pl-[9px]">
            <FormIcon />
            {menus.map((m, i) => (
                <a key={m} href="#" className={i === 0 ? 'ml-3 mr-5' : 'mr-5'}>【{m}】</a>
            ))}
            <svg viewBox="0 0 50 12" className="ml-auto mr-1 h-3 w-[50px]" fill="none" stroke="#000">
                <path d="M1 9h6" strokeWidth="2" />
                <path d="M24 2h6v5h-6zM21 5h6v5h-6z" fill="#cfe4fe" strokeWidth="1.300" />
                <path d="M42 2l7 8M49 2l-7 8" strokeWidth="2" />
            </svg>
        </nav>
        <div className="h-1 shrink-0 border-b-2 border-[#9a9a9a] bg-[#e8f0fa]" />
        <PatientBar />
        <main className="flex min-h-0 flex-1 px-[3px]">
            <PatientPanel />
            <div className="flex w-6 shrink-0 flex-col items-end border-r border-[#9ab2d2] bg-[#e3ecfa] text-[#1e395b]">
                <button className="flex h-[65px] w-[17px] items-start break-all pl-px pt-1 text-left leading-[14px]">
                    <span className="block w-3">相关提醒</span>
                </button>
                <button className="flex h-[50px] w-[19px] items-start break-all rounded-l-[3px] border border-r-0 border-[#9ab2d2] bg-[#f4f8fe] pl-0.5 pt-1 text-left font-bold leading-[14px]">
                    <span className="block w-3">魏守泉</span>
                </button>
                <Triangle color="#1e395b" className="mb-1.5 mr-1.5 mt-auto" />
            </div>
            <div className="flex min-w-0 flex-1 flex-col">
                <div className="flex h-[25px] shrink-0 items-end gap-0.5 border-b border-[#7f9dc4] pl-px">
                    <SlantTab className="h-[22px] w-[101px]">医疗信息一览表</SlantTab>
                    <SlantTab active className="h-[22px] w-[106px]"><span className="-ml-1"><T>吴翔_入院记录</T></span></SlantTab>
                </div>
                <div className="flex h-[26px] shrink-0 items-center border-b border-[#7f9dc4] bg-linear-to-b from-[#e8effc] via-[#d5e7fe] to-[#b0d3fe] pb-px">
                    <Grip className="ml-1 mr-3 h-4" />
                    {toolItems.map((t) => (
                        <button key={t.text} className={`flex shrink-0 items-center justify-between text-left ${t.cls}`}>
                            {t.text}
                            {t.arrow && <Triangle className="mr-2.5 scale-75" />}
                        </button>
                    ))}
                </div>
                <div className="flex h-[27px] shrink-0 border-b border-[#7f9dc4] bg-[#dceafa]">
                    <div className="flex w-[1201px] min-w-0 items-center justify-end gap-1.5 border-r border-[#6488bc] bg-linear-to-b from-[#e4eefa] via-[#a4c0e8] to-[#d2e2f6]">
                        <Grip className="ml-1 mr-auto h-4" />
                        <svg viewBox="0 0 16 14" className="h-3.5 w-4" stroke="#8a8a8a">
                            <path d="M.5.5h15v13H.5zM0 3.500h16M0 10.500h16M5.500 0v14M10.500 0v14" fill="#fff" />
                            <path d="M.5 4h15v3.500H.5z" fill="#ffd048" stroke="#c4781c" />
                        </svg>
                        <svg viewBox="0 0 16 14" className="h-3.5 w-4" stroke="#a4b4cc">
                            <path d="M.5.5h15v13H.5zM0 3.500h16M0 7h16M0 10.500h16M5.500 0v14M10.500 0v14" fill="#c8d6ea" />
                        </svg>
                        <svg viewBox="0 0 16 16" className="h-4 w-4">
                            <path d="M.5 6h15v4H.5zM5.500 6v4M10.500 6v4" fill="#fff" stroke="#666" />
                            <path d="M8 0l3 3H9v2H7V3H5zM8 16l3-3H9v-2H7v2H5z" fill="#3c84cc" />
                        </svg>
                        <Triangle className="mb-1 ml-1 mr-0.5 self-end scale-75" color="#000" />
                    </div>
                </div>
                <Editor />
            </div>
        </main>
        <div className="h-[3px] shrink-0 border-y border-[#8a94a0] bg-white" />
        <Taskbar />
        <EntryDialog />
        <HistoryDialog />
    </div>
);

export default App;
